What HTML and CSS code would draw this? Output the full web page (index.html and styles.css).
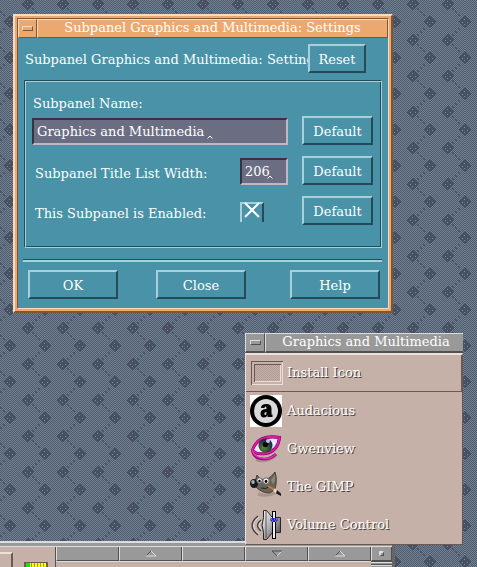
FILE: index.html
```
<!DOCTYPE html>
<html lang="en">
<head>
<meta charset="utf-8">
<title>Desktop</title>
<link rel="stylesheet" href="styles.css">
</head>
<body>
<main class="desktop">
  <svg class="backdrop" aria-hidden="true" shape-rendering="crispEdges">
    <defs>
      <pattern id="checker" width="2" height="2" patternUnits="userSpaceOnUse">
        <rect width="2" height="2" fill="#4f5c6e"/>
        <path d="M0 0h1v1H0zM1 1h1v1H1z" fill="#718193"/>
      </pattern>
      <pattern id="tile" x="10" y="4" width="35" height="36" patternUnits="userSpaceOnUse">
        <rect width="35" height="36" fill="url(#checker)"/>
        <path d="M22 4h2v2h-2zM25 7h2v2h-2zM28 10h2v2h-2zM28 24h2v2h-2zM25 27h2v2h-2zM22 30h2v2h-2z" fill="#4c586a"/>
        <g fill="#485161">
          <path id="dia" d="M17 -6h2v1h1v1h1v1h1v1h1v1h1v2h-1v1h-1v1h-1v1h-1v1h-1v1h-2v-1h-1v-1h-1v-1h-1v-1h-1v-1h-1v-2h1v-1h1v-1h1v-1h1v-1h1z"/>
          <use href="#dia" y="36"/>
          <use href="#dia" x="-18" y="18"/>
          <use href="#dia" x="17" y="18"/>
        </g>
        <path d="M17 33h1v1h-1zM15 0h1v1h-1zM20 0h1v1h-1zM17 2h1v1h-1zM34 15h1v1h-1zM2 18h1v1H2zM32 18h1v1h-1zM34 20h1v1h-1z" fill="#7b8999"/>
      </pattern>
    </defs>
    <rect width="100%" height="100%" fill="url(#tile)"/>
  </svg>

  <section class="window settings" aria-label="Subpanel Graphics and Multimedia: Settings">
    <div class="window-inner">
      <header class="titlebar">
        <button class="menu-button" type="button" aria-label="Window menu"><span class="menu-mark"></span></button>
        <h1 class="title">Subpanel Graphics and Multimedia: Settings</h1>
      </header>
      <form class="form">
        <div class="form-head">
          <span class="form-title">Subpanel Graphics and Multimedia: Settings</span>
          <button class="push" type="button">Reset</button>
        </div>
        <fieldset class="group">
          <label class="name-label" for="name">Subpanel Name:</label>
          <div class="row">
            <span class="field"><input id="name" type="text" value="Graphics and Multimedia"><svg class="caret caret-name" viewBox="0 0 6 4" aria-hidden="true"><path d="M0.500 3.500L3 1L5.500 3.500"/></svg></span>
            <button class="push" type="button">Default</button>
          </div>
          <div class="row">
            <label for="width">Subpanel Title List Width:</label>
            <span class="field field-short"><input id="width" type="text" value="206"><svg class="caret caret-width" viewBox="0 0 6 4" aria-hidden="true"><path d="M0.500 3.500L3 1L5.500 3.500"/></svg></span>
            <button class="push" type="button">Default</button>
          </div>
          <div class="row">
            <label for="enabled">This Subpanel is Enabled:</label>
            <span class="check"><input id="enabled" type="checkbox" checked><svg viewBox="0 0 16 16" aria-hidden="true"><path d="M1 1L15 15M15 1L1 15"/></svg></span>
            <button class="push" type="button">Default</button>
          </div>
        </fieldset>
        <hr class="rule">
        <div class="actions">
          <button class="push" type="button">OK</button>
          <button class="push" type="button">Close</button>
          <button class="push" type="button">Help</button>
        </div>
      </form>
    </div>
  </section>

  <footer class="panel">
    <div class="panel-left">
      <button class="panel-key" type="button" aria-label="Application"></button>
      <span class="meter"></span>
    </div>
    <div class="panel-main">
      <div class="slots">
        <span class="slot"></span>
        <button class="slot" type="button" aria-label="Open subpanel"><svg viewBox="0 0 12 7"><path d="M6 1L1 6" stroke="#505050"/><path d="M6 1L11 6H1" stroke="#dedede"/></svg></button>
        <span class="slot"></span>
        <button class="slot" type="button" aria-label="Close subpanel"><svg viewBox="0 0 12 7"><path d="M11 1L6 6" stroke="#dedede"/><path d="M11 1H1L6 6" stroke="#505050"/></svg></button>
        <button class="slot" type="button" aria-label="Open subpanel"><svg viewBox="0 0 12 7"><path d="M6 1L1 6" stroke="#505050"/><path d="M6 1L11 6H1" stroke="#dedede"/></svg></button>
      </div>
    </div>
    <div class="panel-end">
      <button class="minimize" type="button" aria-label="Minimize"><span></span></button>
      <span class="grip"></span>
    </div>
  </footer>

  <section class="subpanel" aria-label="Graphics and Multimedia">
    <header class="titlebar">
      <button class="menu-button" type="button" aria-label="Window menu"><span class="menu-mark"></span></button>
      <h2 class="title">Graphics and Multimedia</h2>
    </header>
    <ul class="apps">
      <li class="install"><a href="#install">
        <svg viewBox="0 0 32 32" shape-rendering="crispEdges" aria-hidden="true">
          <defs><pattern id="dots" width="2" height="2" patternUnits="userSpaceOnUse"><path d="M0 0h1v1H0zM1 1h1v1H1z" fill="#b09b92"/></pattern></defs>
          <path d="M0.500 27.500h31v-23" fill="none" stroke="#eadfd9"/><path d="M0.500 27.500v-23h31" fill="none" stroke="#6b5952"/>
          <rect x="4" y="8" width="25" height="16" fill="url(#dots)"/>
          <path d="M3.500 24.500h26v-17" fill="none" stroke="#eadfd9"/><path d="M3.500 24.500v-17h26" fill="none" stroke="#6b5952"/>
        </svg>Install Icon</a></li>
      <li><a href="#audacious">
        <svg viewBox="0 0 32 32" aria-hidden="true">
          <rect width="32" height="32" fill="#fff"/><circle cx="16" cy="16" r="16"/><circle cx="16" cy="16" r="12" fill="#d9d9d9"/>
          <path d="M11 13q0-4 5.500-4 5 0 5 5v5.500h1v2.500h-5v-2q-1 2.500-3.500 2.500-3.500 0-3.500-4 0-4.500 6-4.500v-1q0-1.500-1-1.500t-1 1.500zM16.500 17q-2.200 0-2.200 1.500 0 1.500 1 1.500 1.200 0 1.200-2z"/>
        </svg>Audacious</a></li>
      <li><a href="#gwenview">
        <svg viewBox="0 0 32 32" aria-hidden="true">
          <defs><radialGradient id="iris" cx=".4" cy=".65" r=".7"><stop offset="0" stop-color="#668c25"/><stop offset=".6" stop-color="#254540"/><stop offset="1" stop-color="#182034"/></radialGradient></defs>
          <path d="M6 27Q17 31 27 22" fill="none" stroke="#806a68" stroke-width="2" opacity=".5"/>
          <path d="M2.500 17Q8 1 29.500 4.500Q28 18 16 20.500Q6 22 2.500 17Z" fill="#e8e9ff" stroke="#6b0a55" stroke-width="3"/>
          <path d="M2.500 17Q8 1 29.500 4.500Q28 18 16 20.500Q6 22 2.500 17Z" fill="none" stroke="#e514a8" stroke-width="2"/>
          <circle cx="15.500" cy="12.500" r="7" fill="url(#iris)"/><circle cx="15.500" cy="11.500" r="2.800" fill="#080b0b"/><circle cx="18" cy="8" r="2" fill="#b9c5f5"/>
          <path d="M2 16Q3 27 16 26Q22 25 26 21" fill="none" stroke="#8d0c6c" stroke-width="2.500"/><path d="M2 16Q4 26 16 25.500Q22 25 26 21" fill="none" stroke="#f32bb9" stroke-width="1.400"/>
        </svg>Gwenview</a></li>
      <li><a href="#gimp">
        <svg viewBox="0 0 32 32" aria-hidden="true">
          <path d="M8 23Q15 26 25 22" fill="none" stroke="#8e7970" stroke-width="3" opacity=".5"/>
          <path d="M7 4L10 8Q18 11 25 1Q27 6 26 13Q26 20 19 22Q11 22 5 15Q5 9 7 4Z" fill="#69645a" stroke="#45413a"/>
          <path d="M21 9Q24 6 25 3Q26 10 23 13Z" fill="#8d877a"/>
          <ellipse cx="4" cy="12.500" rx="4" ry="4.500" fill="#17191a"/><ellipse cx="3" cy="11" rx="1.700" ry="2" fill="#aab4b8"/>
          <circle cx="9.500" cy="9.500" r="2.700" fill="#eee" stroke="#666"/><circle cx="16" cy="10" r="3.200" fill="#eee" stroke="#666"/><circle cx="9.500" cy="10" r="1.200"/><circle cx="16" cy="10.500" r="1.400"/>
          <path d="M11 17Q16 19 20 15" fill="none" stroke="#242320"/>
          <path d="M18 15L25 19" stroke="#d77722" stroke-width="2"/><path d="M24 18.500L27 21" stroke="#ddd" stroke-width="2.500"/><path d="M27 19L31 22.500V25L26 22.500Z" fill="#1c1c1c"/>
        </svg>The GIMP</a></li>
      <li><a href="#volume">
        <svg viewBox="0 0 32 32" aria-hidden="true">
          <defs><linearGradient id="metal" x2="1" y2="1"><stop offset="0" stop-color="#fff"/><stop offset=".5" stop-color="#aaa"/><stop offset="1" stop-color="#333"/></linearGradient></defs>
          <path d="M8 7Q-4 16.500 8 26M11 11Q4 16.500 11 22" fill="none" stroke="#3e3e40" stroke-width="1.300"/><path d="M9 8Q-2 16.500 9 25M12 12Q6 16.500 12 21" fill="none" stroke="#eee" stroke-width=".7"/>
          <path d="M13.500 1.500h3l6 7h8v15h-8l-6 7h-3v-7q-3-7 0-15z" fill="url(#metal)" stroke="#252525"/>
          <path d="M16 2v27" stroke="#555" stroke-width="1"/>
          <rect x="22.500" y="2.500" width="3" height="27" fill="#eee" stroke="#000"/><path d="M21 9h6l1 2-2 2h-4l-2-2z" fill="#2526ba"/><path d="M21 10h1M24 10h1M26 10h1M22 12h1M25 12h1" stroke="#aaf"/>
        </svg>Volume Control</a></li>
    </ul>
  </section>
</main>
</body>
</html>
```
FILE: styles.css
```
* { box-sizing: border-box; }
body { margin: 0; font: 13px/16px "DejaVu Serif", serif; color: #fff; }
button, input { font: inherit; color: inherit; border-radius: 0; }
button { padding: 0; }
h1, h2, ul, fieldset, hr { margin: 0; padding: 0; }
a { color: inherit; text-decoration: none; }

.desktop { position: relative; height: 100vh; overflow: hidden; background: #5d6b7e; }
.backdrop { position: absolute; inset: 0; width: 100%; height: 100%; }

/* Title bars */
.titlebar { display: flex; }
.title { flex: 1; font: inherit; text-align: center; white-space: nowrap; }
.menu-button { display: flex; align-items: center; justify-content: center; background: none; }
.menu-mark { width: 11px; height: 5px; border: 1px solid; }

/* Settings window */
.window { position: absolute; border: 2px solid; border-color: #fbdac0 #7d5637 #7d5637 #fbdac0; background: #eda870; padding: 2px; }
.settings { left: 13px; top: 14px; width: 380px; }
.window-inner { border: 1px solid; border-color: #7d5637 #fbdac0 #fbdac0 #7d5637; background: #4992a8; }
.settings .titlebar { background: #eda870; }
.settings .menu-button { width: 19px; height: 19px; border: 1px solid; border-color: #fbdac0 #7d5637 #7d5637 #fbdac0; }
.settings .title { height: 19px; border: 1px solid; border-color: #fbdac0 #7d5637 #7d5637 #fbdac0; }
.settings .menu-mark { border-color: #fbdac0 #7d5637 #7d5637 #fbdac0; }

.form { padding: 6px 6px 9px; }
.form-head { display: flex; align-items: center; padding: 0 16px 7px 1px; }
.form-title { flex: 1; min-width: 0; padding-top: 2px; overflow: hidden; white-space: nowrap; }
.form-head .push { width: 58px; }
.push { height: 29px; padding-top: 2px; border: 2px solid; border-color: #a9d0da #244b57 #244b57 #a9d0da; background: #4992a8; }

.group { border: 1px solid; border-color: #244b57 #a9d0da #a9d0da #244b57; box-shadow: inset 1px 1px #a9d0da, inset -1px -1px #244b57; padding: 15px 8px 22px 7px; display: flex; flex-direction: column; gap: 11px; }
.name-label { padding-left: 1px; margin-bottom: -7px; }
.row { display: flex; align-items: center; height: 29px; }
.row label { flex: 1; padding: 6px 0 0 3px; }
.row .push { width: 71px; margin-left: 14px; }
.field { position: relative; flex: 1; align-self: flex-end; height: 27px; }
.field-short { flex: none; width: 48px; }
.field input { display: block; width: 100%; height: 100%; padding: 0 3px; border: 2px solid; border-color: #32343f #b9bac4 #b9bac4 #32343f; background: #6b6e82; outline: 0; }
.caret { position: absolute; bottom: 6px; width: 6px; height: 4px; fill: none; stroke: #fff; }
.caret-name { left: 175px; }
.caret-width { left: 27px; }
.check { position: relative; width: 24px; height: 20px; margin-right: 24px; align-self: flex-end; margin-bottom: 3px; }
.check input { appearance: none; display: block; width: 24px; height: 20px; margin: 0; border: 2px solid; border-color: #a9d0da #244b57 transparent #a9d0da; border-bottom: 0; }
.check svg { position: absolute; left: 4px; top: 0; width: 16px; height: 16px; stroke: #fff; stroke-width: 2; pointer-events: none; }

.rule { margin: 11px 0 8px -1px; border: 0; height: 3px; background: #a9d0da; border-top: 1px solid #244b57; }
.actions { display: flex; justify-content: space-between; padding: 0 2px 0 4px; }
.actions .push { width: 90px; }
.actions .push:last-child { margin-left: 6px; }

/* Subpanel menu */
.subpanel { position: absolute; left: 245px; top: 333px; width: 218px; }
.subpanel .titlebar { background: #999; }
.subpanel .menu-button, .subpanel .title { height: 20px; border: 1px solid; border-color: #ddd #505050 #505050 #ddd; border-bottom-width: 2px; }
.subpanel .menu-button { width: 20px; }
.subpanel .menu-mark { border-color: #ddd #505050 #505050 #ddd; }
.subpanel .title { border-right: 0; padding-left: 3px; }
.apps { list-style: none; background: #c6b1a9; border: 1px solid; border-color: #eadfd9 #6b5952 #6b5952 #eadfd9; border-top-width: 2px; text-shadow: 1px 1px #4a3d38; }
.apps a { display: flex; align-items: center; gap: 5px; height: 38px; padding-left: 4px; }
.apps svg { width: 32px; height: 32px; flex: none; }
.apps .install { border: 1px solid #6b5952; border-width: 0 1px 1px 0; }
.apps .install a { height: 36px; gap: 4px; padding-left: 5px; }

/* Front panel */
.panel { position: absolute; left: 0; bottom: 0; width: 395px; height: 26px; display: flex; background: #c6b1a9; border-top: 2px solid #ddd; border-right: 3px solid #666; }
.panel::before { content: ""; position: absolute; left: 0; right: 0; top: 0; height: 3px; background: #999; border-bottom: 1px solid #ddd; }
.panel-left { display: flex; flex: 0 0 56px; padding-top: 9px; border-right: 1px solid #505050; }
.panel-key { width: 13px; height: 20px; border: 2px solid; border-color: #eadfd9 #6b5952 #6b5952 #c6b1a9; border-left: 0; background: #c6b1a9; }
.meter { width: 24px; height: 20px; margin: 10px 0 0 11px; border: 2px solid #6b5952; border-top-width: 1px; background: linear-gradient(90deg, #0e0 4px, transparent 4px), repeating-linear-gradient(90deg, #ff0 0 2px, #a59a00 2px 3px); }
.panel-main { flex: 1; padding-top: 2px; }
.slots { display: flex; border-bottom: 1px solid #ddd; }
.slot { flex: 1; display: flex; align-items: center; justify-content: center; height: 16px; border: 1px solid; border-color: #ddd #505050 #505050 #ddd; background: #999; }
.slot svg { width: 12px; height: 7px; fill: none; }
.panel-end { flex: 0 0 21px; padding-top: 2px; }
.minimize { display: flex; align-items: center; justify-content: center; width: 21px; height: 16px; border: 1px solid; border-color: #ddd #505050 #505050 #ddd; background: #999; }
.minimize span { width: 5px; height: 5px; border: 1px solid; border-color: #ddd #505050 #505050 #ddd; border-width: 2px 1px 1px 2px; }
.grip { display: block; height: 8px; background: repeating-linear-gradient(#505050 0 1px, #ddd 1px 2px, #999 2px 3px); }
```
